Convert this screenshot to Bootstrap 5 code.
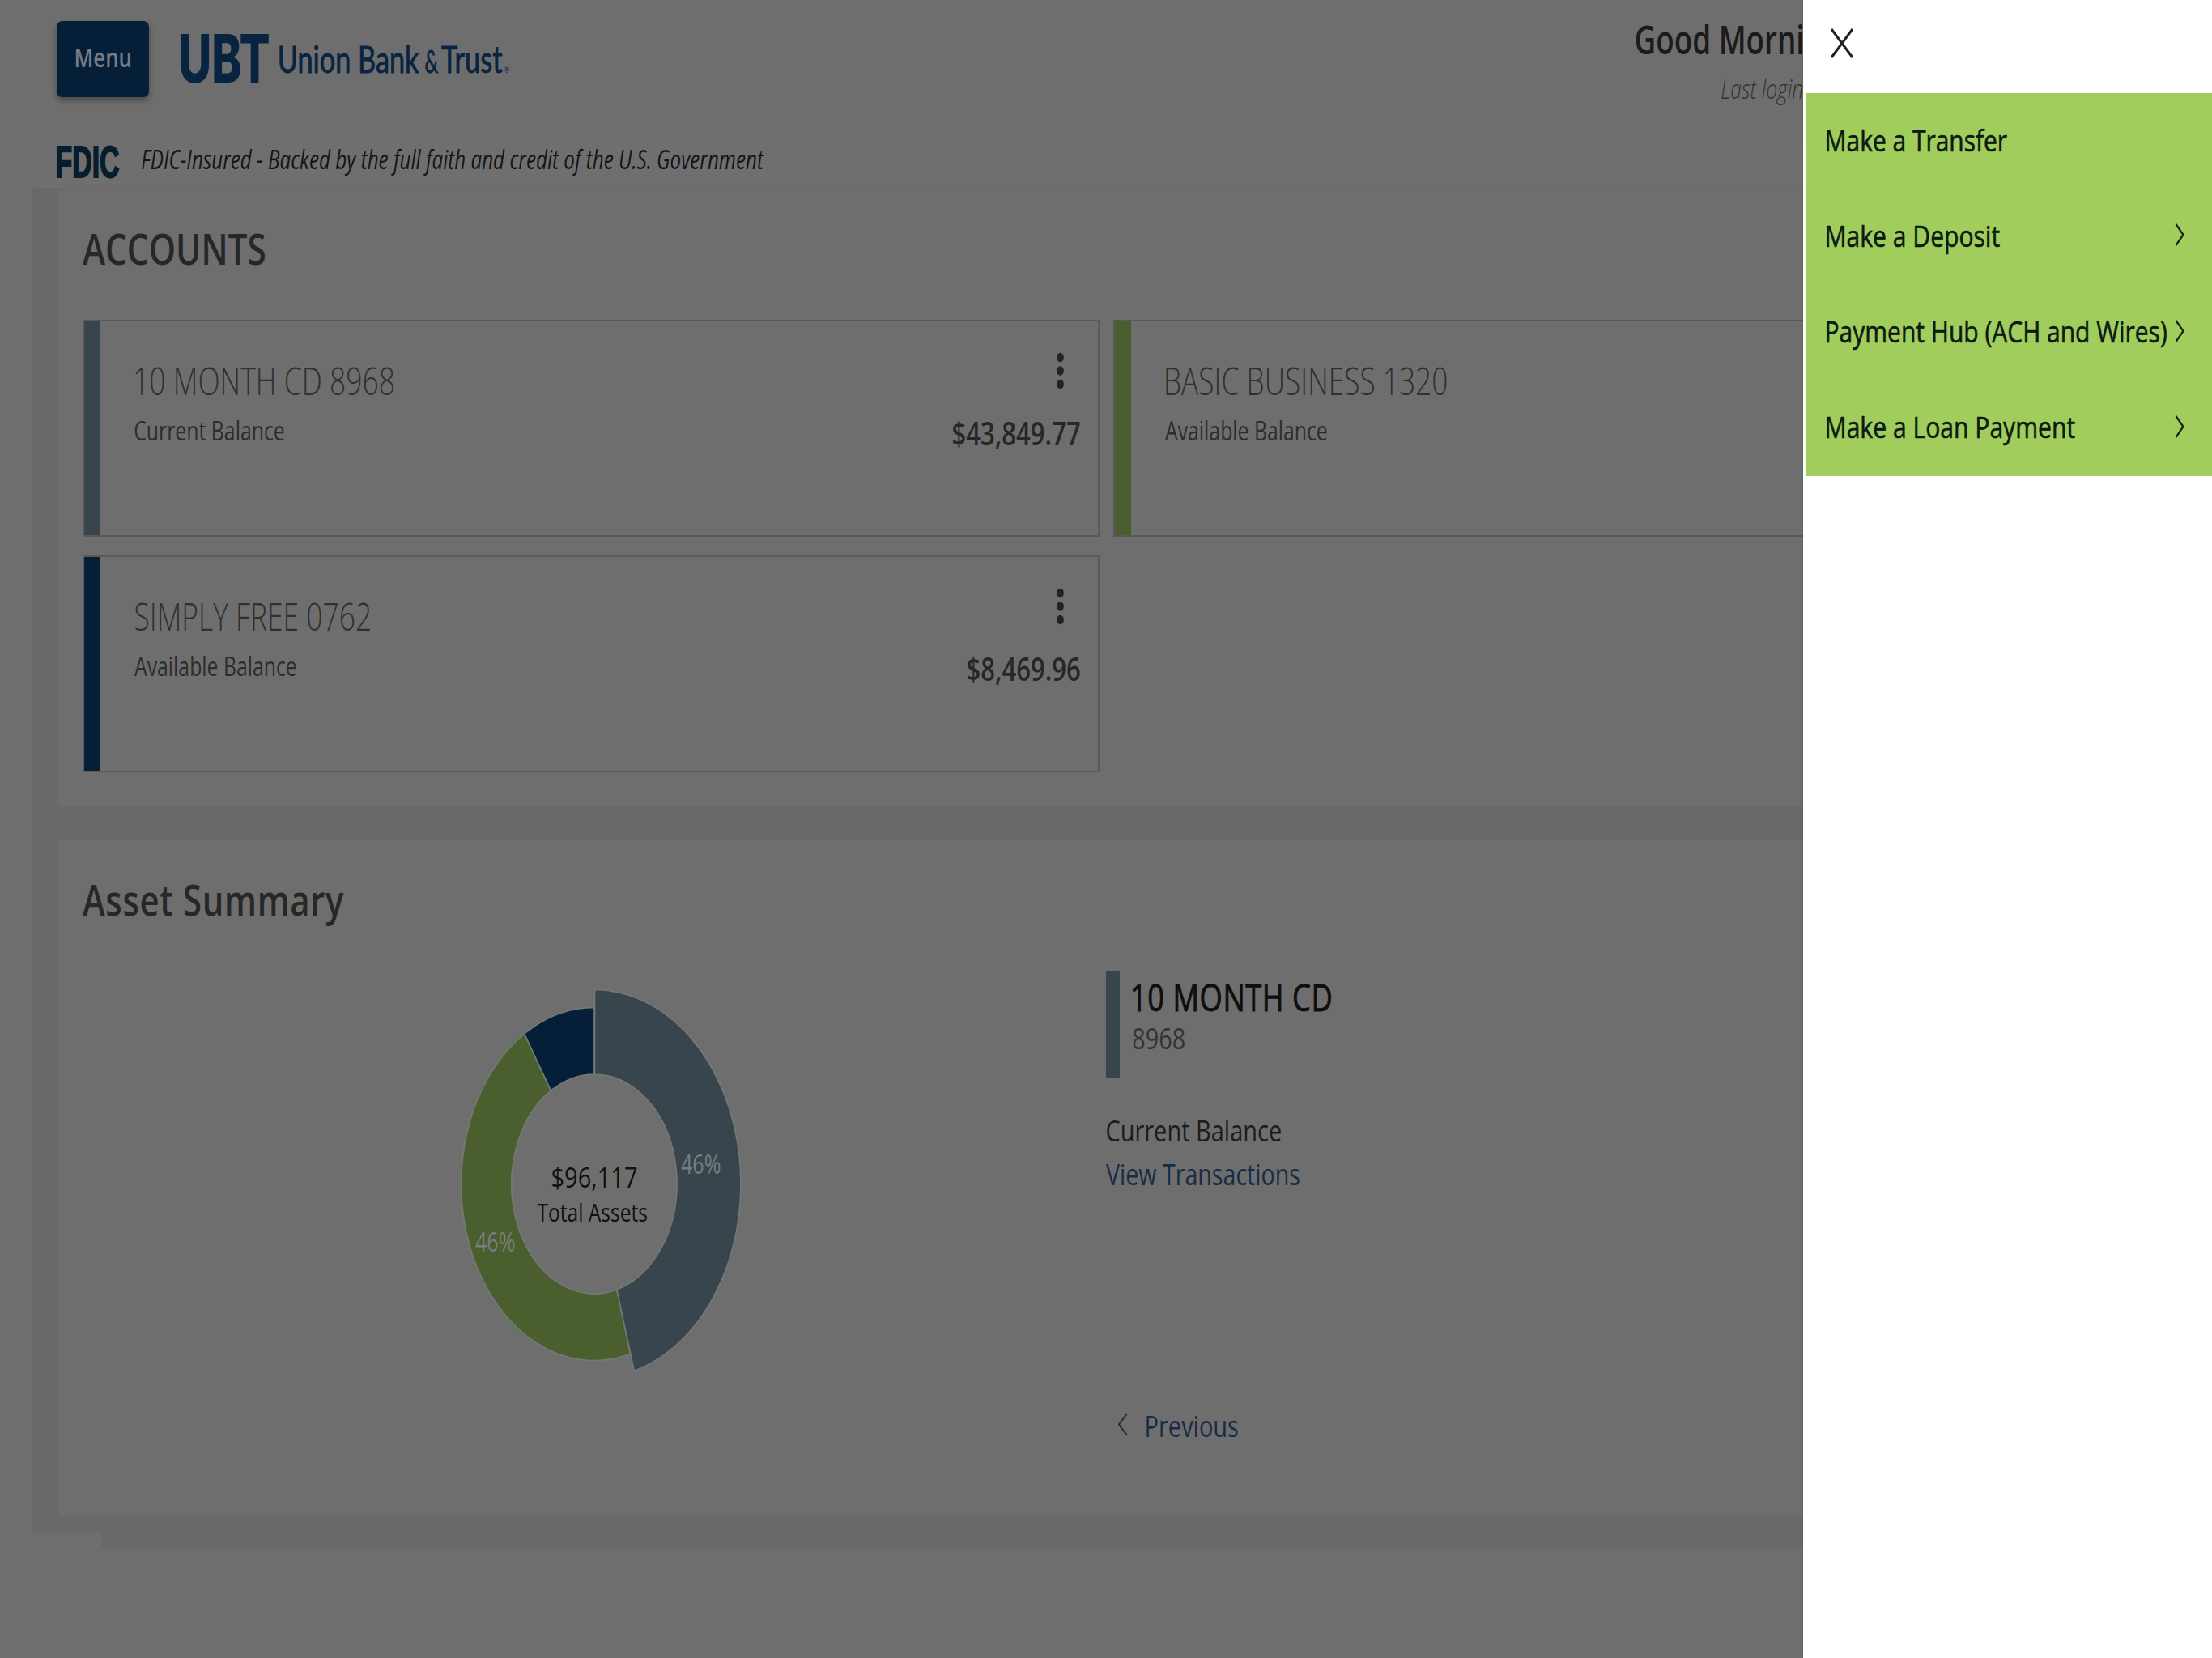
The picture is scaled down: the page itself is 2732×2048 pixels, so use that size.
<!DOCTYPE html>
<html lang="en">
<head>
    <meta charset="UTF-8">
    <meta name="viewport" content="width=device-width, initial-scale=1.0">
    <title>Union Bank &amp; Trust</title>
    <link rel="stylesheet" href="https://cdn.jsdelivr.net/npm/bootstrap@5.3.0/dist/css/bootstrap.min.css">
    <style>
        body { background: #6e6e6e; font-family: "Open Sans", "Noto Sans", sans-serif; color: #272727; height: 2048px; overflow: hidden; line-height: 1; }
        .page { width: 2227px; }
        .fit { display: inline-block; vertical-align: top; white-space: nowrap; line-height: 1; transform-origin: 0 50%; text-align: left; }
        svg { display: block; flex: none; overflow: visible; }

        .topbar { height: 167px; padding: 26px 1px 0 70px; }
        .menu-btn { width: 114px; height: 94px; border: 0; border-radius: 7px; background: #061f38; color: #747c84; font-size: 32px; font-weight: 600; padding: 0 0 5px 1px; box-shadow: 0 4px 7px rgba(0, 0, 0, .35); display: flex; align-items: center; justify-content: center; }
        .logo { margin: 6px 0 0 39px; color: #082440; }
        .logo-mark { font: 800 82px Inter, sans-serif; line-height: 1; }
        .logo-words { font-family: Lato, sans-serif; font-size: 46px; margin: 18px 0 0 13px; -webkit-text-stroke: .9px #082440; }
        .logo-amp { font-size: 38px; margin: 0 4px 0 7px; }
        .logo-reg { font-size: 11px; margin-left: 2px; -webkit-text-stroke: 0; }
        .greet { font-size: 48px; font-weight: 600; color: #1b1b1b; margin-bottom: 20px; height: 48px; margin-top: -1px; }
        .last-login { font-size: 33px; font-weight: 300; font-style: italic; color: #333; height: 33px; }

        .fdic { height: 65px; margin-left: 39px; padding-left: 31px; background: #6f6f6f; border-radius: 8px; }
        .fdic-text { font-size: 32px; font-style: italic; color: #151515; margin: 14px 0 0 27px; }

        .workspace { margin-left: 39px; padding: 1px 0 22px 31px; background: #696969; }
        .panel { background: #6e6e6e; border-radius: 8px 0 0 8px; padding-left: 32px; overflow: hidden; }
        .panel-accounts { height: 763px; padding-top: 47px; margin-bottom: 41px; }
        .panel-assets { height: 835px; padding-top: 47px; }
        .panel-title { font-size: 53px; font-weight: 600; height: 53px; margin: 0; }
        .shelf { margin-left: 125px; height: 19px; background: #696969; }

        .accounts { grid-template-columns: 1256px 1256px; gap: 23px 17px; margin-top: 62px; }
        .acct { height: 268px; border: 2px solid #5a5a5a; display: flex; }
        .stripe { width: 20px; flex: none; }
        .c-slate { background: #39454c; }
        .c-green { background: #4b5f2e; }
        .c-navy { background: #061f38; }
        .acct-name { font-size: 47px; font-weight: 300; height: 47px; margin: 50px 0 22px 1px; color: #303030; }
        .acct-kind { font-size: 32px; color: #2d2d2d; }
        .acct-left { padding-left: 42px; }
        .acct-right { padding: 38px 22px 0 0; }
        .dots { margin: 0 20px 34px auto; }
        .amount { font-size: 40px; font-weight: 600; }

        .chart-col { width: 1264px; padding-top: 73px; }
        .detail-col { padding-top: 62px; }
        .bar { width: 17px; height: 132px; }
        .detail-name { font-size: 46px; height: 46px; margin: 9px 0 11px; color: #0e0e0e; -webkit-text-stroke: .9px #0e0e0e; }
        .detail-num { font-size: 36px; color: #333; }
        .detail-kind { font-size: 36.5px; height: 36px; margin: 47px 0 19px 1px; color: #1c1c1c; }
        .lnk { font-size: 36px; height: 36px; color: #182c44; text-decoration: none; }
        .prev { margin: 275px 0 0 14px; gap: 23px; }

        .drawer { --bs-offcanvas-width: 505px; --bs-offcanvas-bg: #fff; --bs-offcanvas-border-width: 0; box-shadow: 0 0 3px rgba(0, 0, 0, .3); }
        .drawer-head { height: 115px; padding: 35px 0 0 33px; }
        .drawer .list-group { margin-left: 3px; background: #a0cd5c; }
        .drawer .list-group-item { height: 118.25px; padding: 0 34px 4px 26px; border: 0; background: transparent; color: #0b1a12; font-size: 37px; }
        .drawer .fit { -webkit-text-stroke: .6px #0b1a12; }
    </style>
</head>
<body>
    <div class="page">
        <header class="topbar d-flex align-items-start">
            <button class="menu-btn" type="button"><span class="fit" data-w="67">Menu</span></button>
            <div class="logo d-flex align-items-start">
                <span class="logo-mark fit" data-w="109">UBT</span>
                <div class="logo-words d-flex align-items-baseline">
                    <span class="fit" data-w="173">Union Bank</span>
                    <span class="logo-amp fit" data-w="16">&amp;</span>
                    <span class="fit" data-w="76">Trust</span>
                    <span class="logo-reg fit" data-w="6">®</span>
                </div>
            </div>
            <div class="ms-auto text-end">
                <div class="greet"><span class="fit" data-w="206">Good Morni</span></div>
                <div class="last-login"><span class="fit" data-w="100">Last login</span></div>
            </div>
        </header>

        <div class="fdic d-flex">
            <svg width="78" height="60" viewBox="0 0 78 60"><text x="-1.5" y="52" font-family="Liberation Sans, sans-serif" font-weight="700" font-size="55" fill="#061d2d" stroke="#061d2d" stroke-width="2" textLength="79" lengthAdjust="spacingAndGlyphs">FDIC</text></svg>
            <div class="fdic-text"><span class="fit" data-w="769">FDIC-Insured - Backed by the full faith and credit of the U.S. Government</span></div>
        </div>

        <main class="workspace">
            <section class="panel panel-accounts">
                <h2 class="panel-title"><span class="fit" data-w="225">ACCOUNTS</span></h2>
                <div class="accounts d-grid">
                    <div class="acct">
                        <div class="stripe c-slate"></div>
                        <div class="acct-left">
                            <div class="acct-name"><span class="fit" data-w="319">10 MONTH CD 8968</span></div>
                            <div class="acct-kind"><span class="fit" data-w="185">Current Balance</span></div>
                        </div>
                        <div class="acct-right ms-auto">
                            <svg class="dots" width="9" height="46" fill="#232323"><ellipse cx="4.5" cy="6.5" rx="4.4" ry="5.8"/><ellipse cx="4.5" cy="23" rx="4.4" ry="5.8"/><ellipse cx="4.5" cy="39.5" rx="4.4" ry="5.8"/></svg>
                            <div class="amount"><span class="fit" data-w="157">$43,849.77</span></div>
                        </div>
                    </div>
                    <div class="acct">
                        <div class="stripe c-green"></div>
                        <div class="acct-left">
                            <div class="acct-name"><span class="fit" data-w="347">BASIC BUSINESS 1320</span></div>
                            <div class="acct-kind"><span class="fit" data-w="200">Available Balance</span></div>
                        </div>
                    </div>
                    <div class="acct">
                        <div class="stripe c-navy"></div>
                        <div class="acct-left">
                            <div class="acct-name"><span class="fit" data-w="290">SIMPLY FREE 0762</span></div>
                            <div class="acct-kind"><span class="fit" data-w="200">Available Balance</span></div>
                        </div>
                        <div class="acct-right ms-auto">
                            <svg class="dots" width="9" height="46" fill="#232323"><ellipse cx="4.5" cy="6.5" rx="4.4" ry="5.8"/><ellipse cx="4.5" cy="23" rx="4.4" ry="5.8"/><ellipse cx="4.5" cy="39.5" rx="4.4" ry="5.8"/></svg>
                            <div class="amount"><span class="fit" data-w="139">$8,469.96</span></div>
                        </div>
                    </div>
                </div>
            </section>

            <section class="panel panel-assets">
                <h2 class="panel-title"><span class="fit" data-w="323" data-spaced>Asset Summary</span></h2>
                <div class="d-flex">
                    <div class="chart-col d-flex justify-content-center">
                        <svg width="380" height="500" viewBox="0 0 380 500">
                            <g stroke="#737a76" stroke-width="1.6">
                                <path fill="#4b5f2e" d="M234.7 462.3A164.3 218 0 0 1 103.7 67L136.4 137.2A102 135.5 0 0 0 217.8 382.9Z"/>
                                <path fill="#061f38" d="M103.7 67A164.3 218 0 0 1 190 34.5V117A102 135.5 0 0 0 136.4 137.2Z"/>
                                <path fill="#39454c" d="M190.5 12.5A181 240 0 0 1 239.3 483.4L217.8 382.9A102 135.5 0 0 0 190.5 117Z"/>
                            </g>
                            <g font-size="32" fill="#777e80">
                                <text x="297" y="240" textLength="49.5" lengthAdjust="spacingAndGlyphs">46%</text>
                                <text x="43" y="335.5" textLength="49.5" lengthAdjust="spacingAndGlyphs">46%</text>
                            </g>
                            <g fill="#111">
                                <text x="136.5" y="257.3" font-size="35.5" textLength="107" lengthAdjust="spacingAndGlyphs">$96,117</text>
                                <text x="119.5" y="299" font-size="31.5" textLength="136.5" lengthAdjust="spacingAndGlyphs">Total Assets</text>
                            </g>
                        </svg>
                    </div>
                    <div class="detail-col">
                        <div class="d-flex">
                            <div class="bar c-slate"></div>
                            <div class="ms-3">
                                <div class="detail-name"><span class="fit" data-w="245" data-spaced>10 MONTH CD</span></div>
                                <div class="detail-num"><span class="fit" data-w="64">8968</span></div>
                            </div>
                        </div>
                        <div class="detail-kind"><span class="fit" data-w="215">Current Balance</span></div>
                        <a class="lnk d-block" href="#"><span class="fit" data-w="239">View Transactions</span></a>
                        <a class="lnk prev d-flex" href="#">
                            <svg width="13" height="30" fill="none" stroke="#182c44" stroke-width="2"><path d="M12 2L2 15.5L12 29"/></svg>
                            <span class="fit" data-w="113">Previous</span>
                        </a>
                    </div>
                </div>
            </section>
        </main>
        <div class="shelf"></div>
    </div>

    <aside class="drawer offcanvas offcanvas-end show" tabindex="-1" data-bs-backdrop="false" data-bs-scroll="true">
        <div class="drawer-head">
            <svg width="30" height="38" fill="none" stroke="#222" stroke-width="3"><path d="M2 1L28 36M28 1L2 36"/></svg>
        </div>
        <div class="list-group list-group-flush rounded-0">
            <a class="list-group-item d-flex align-items-center justify-content-between" href="#"><span class="fit" data-w="223">Make a Transfer</span></a>
            <a class="list-group-item d-flex align-items-center justify-content-between" href="#"><span class="fit" data-w="214">Make a Deposit</span>
                <svg width="12" height="28" fill="none" stroke="#142014" stroke-width="2.2"><path d="M1.5 1L10.5 14L1.5 27"/></svg></a>
            <a class="list-group-item d-flex align-items-center justify-content-between" href="#"><span class="fit" data-w="420">Payment Hub (ACH and Wires)</span>
                <svg width="12" height="28" fill="none" stroke="#142014" stroke-width="2.2"><path d="M1.5 1L10.5 14L1.5 27"/></svg></a>
            <a class="list-group-item d-flex align-items-center justify-content-between" href="#"><span class="fit" data-w="307">Make a Loan Payment</span>
                <svg width="12" height="28" fill="none" stroke="#142014" stroke-width="2.2"><path d="M1.5 1L10.5 14L1.5 27"/></svg></a>
        </div>
    </aside>

    <script src="https://cdn.jsdelivr.net/npm/bootstrap@5.3.0/dist/js/bootstrap.bundle.min.js"></script>
    <script>
        // Condense each label to the given width, spaced ones get part of it as letter spacing
        const ctx = document.createElement("canvas").getContext("2d");

        document.querySelectorAll(".fit").forEach(el => {
            const cs = getComputedStyle(el);
            const w = Number(el.dataset.w);
            const text = el.textContent;
            ctx.font = `${cs.fontStyle} ${cs.fontWeight} ${cs.fontSize} ${cs.fontFamily}`;
            const m = ctx.measureText(text);
            const ink = m.actualBoundingBoxLeft + m.actualBoundingBoxRight;
            let squeeze = w / ink;
            if ("spaced" in el.dataset) {
                squeeze = 0.79;
                el.style.letterSpacing = (w / squeeze - ink) / (text.length - 1) + "px";
            }
            el.style.transform = `translateX(${m.actualBoundingBoxLeft * squeeze}px) scaleX(${squeeze})`;
            el.style.width = w + "px";
        });
    </script>
</body>
</html>
